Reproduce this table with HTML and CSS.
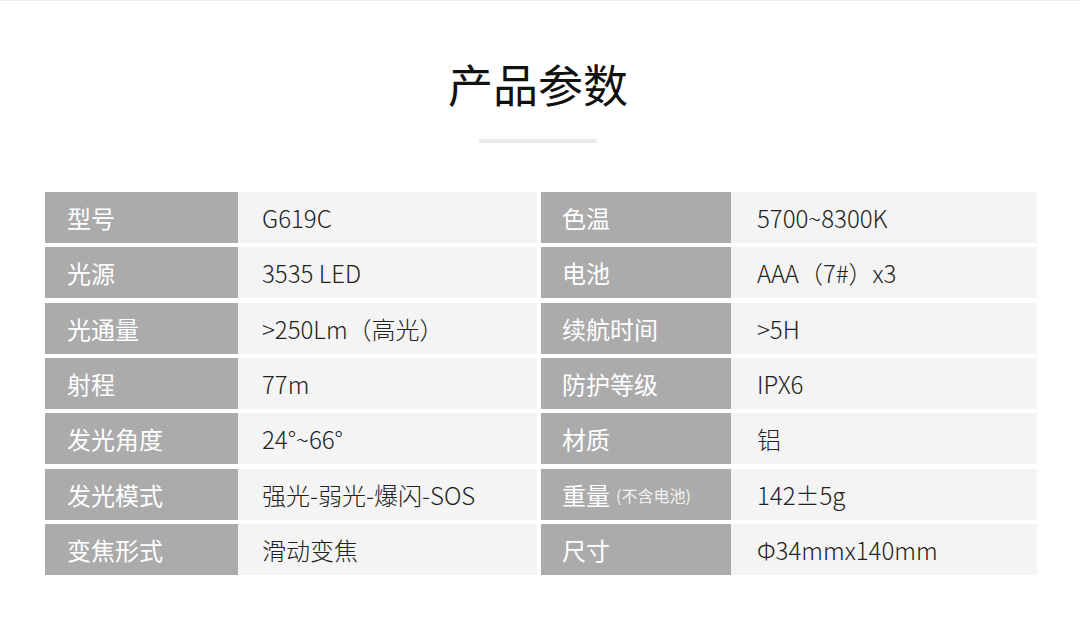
FILE: index.html
```html
<!DOCTYPE html>
<html lang="zh-CN">
<head>
<meta charset="utf-8">
<title>产品参数</title>
<link rel="stylesheet" href="styles.css">
</head>
<body>
<div class="page">
  <h1 class="title">产品参数</h1>
  <div class="bar"></div>
  <div class="specs">
    <div class="pair left"><div class="label">型号</div><div class="value">G619C</div></div>
    <div class="pair right"><div class="label">色温</div><div class="value">5700~8300K</div></div>
    <div class="pair left"><div class="label">光源</div><div class="value">3535 LED</div></div>
    <div class="pair right"><div class="label">电池</div><div class="value">AAA（7#）x3</div></div>
    <div class="pair left"><div class="label">光通量</div><div class="value">&gt;250Lm（高光）</div></div>
    <div class="pair right"><div class="label">续航时间</div><div class="value">&gt;5H</div></div>
    <div class="pair left"><div class="label">射程</div><div class="value">77m</div></div>
    <div class="pair right"><div class="label">防护等级</div><div class="value">IPX6</div></div>
    <div class="pair left"><div class="label">发光角度</div><div class="value">24°~66°</div></div>
    <div class="pair right"><div class="label">材质</div><div class="value">铝</div></div>
    <div class="pair left"><div class="label">发光模式</div><div class="value">强光-弱光-爆闪-SOS</div></div>
    <div class="pair right"><div class="label">重量<span class="note">(不含电池)</span></div><div class="value">142±5g</div></div>
    <div class="pair left"><div class="label">变焦形式</div><div class="value">滑动变焦</div></div>
    <div class="pair right"><div class="label">尺寸</div><div class="value">Φ34mmx140mm</div></div>
  </div>
</div>
</body>
</html>
```

FILE: styles.css
```css
* { box-sizing: border-box; }
html, body { margin: 0; padding: 0; background: #ffffff; }
body {
  font-family: "Noto Sans CJK SC", "Noto Sans", sans-serif;
  color: #222222;
  border-top: 1px solid #ececec;
}
.page {
  width: 1076px;
  display: flex;
  flex-direction: column;
  align-items: center;
}
.title {
  margin: 56px 0 0;
  font-size: 45px;
  line-height: 54px;
  font-weight: 400;
  color: #111111;
  letter-spacing: 0;
}
.bar {
  margin-top: 28px;
  width: 118px;
  height: 4px;
  background: #e9e9e9;
}
.specs {
  margin-top: 49px;
  margin-left: 45px;
  align-self: flex-start;
  display: grid;
  grid-template-columns: 492px 496px;
  grid-auto-rows: 51px;
  column-gap: 4px;
  row-gap: 4.33px;
}
.pair { display: flex; height: 100%; }
.label {
  background: #ababab;
  color: #ffffff;
  font-size: 24px;
  display: flex;
  align-items: center;
  white-space: nowrap;
}
.value {
  flex: 1;
  background: #f4f4f4;
  color: #222222;
  font-size: 24px;
  font-weight: 300;
  display: flex;
  align-items: center;
  white-space: nowrap;
}
.left .label { width: 193px; padding-left: 22px; }
.left .value { padding-left: 24px; }
.right .label { width: 190px; padding-left: 21px; }
.right .value { padding-left: 26px; }
.note {
  font-size: 16px;
  margin-left: 6px;
  padding-top: 2px;
  color: #f2f2f2;
}
```
